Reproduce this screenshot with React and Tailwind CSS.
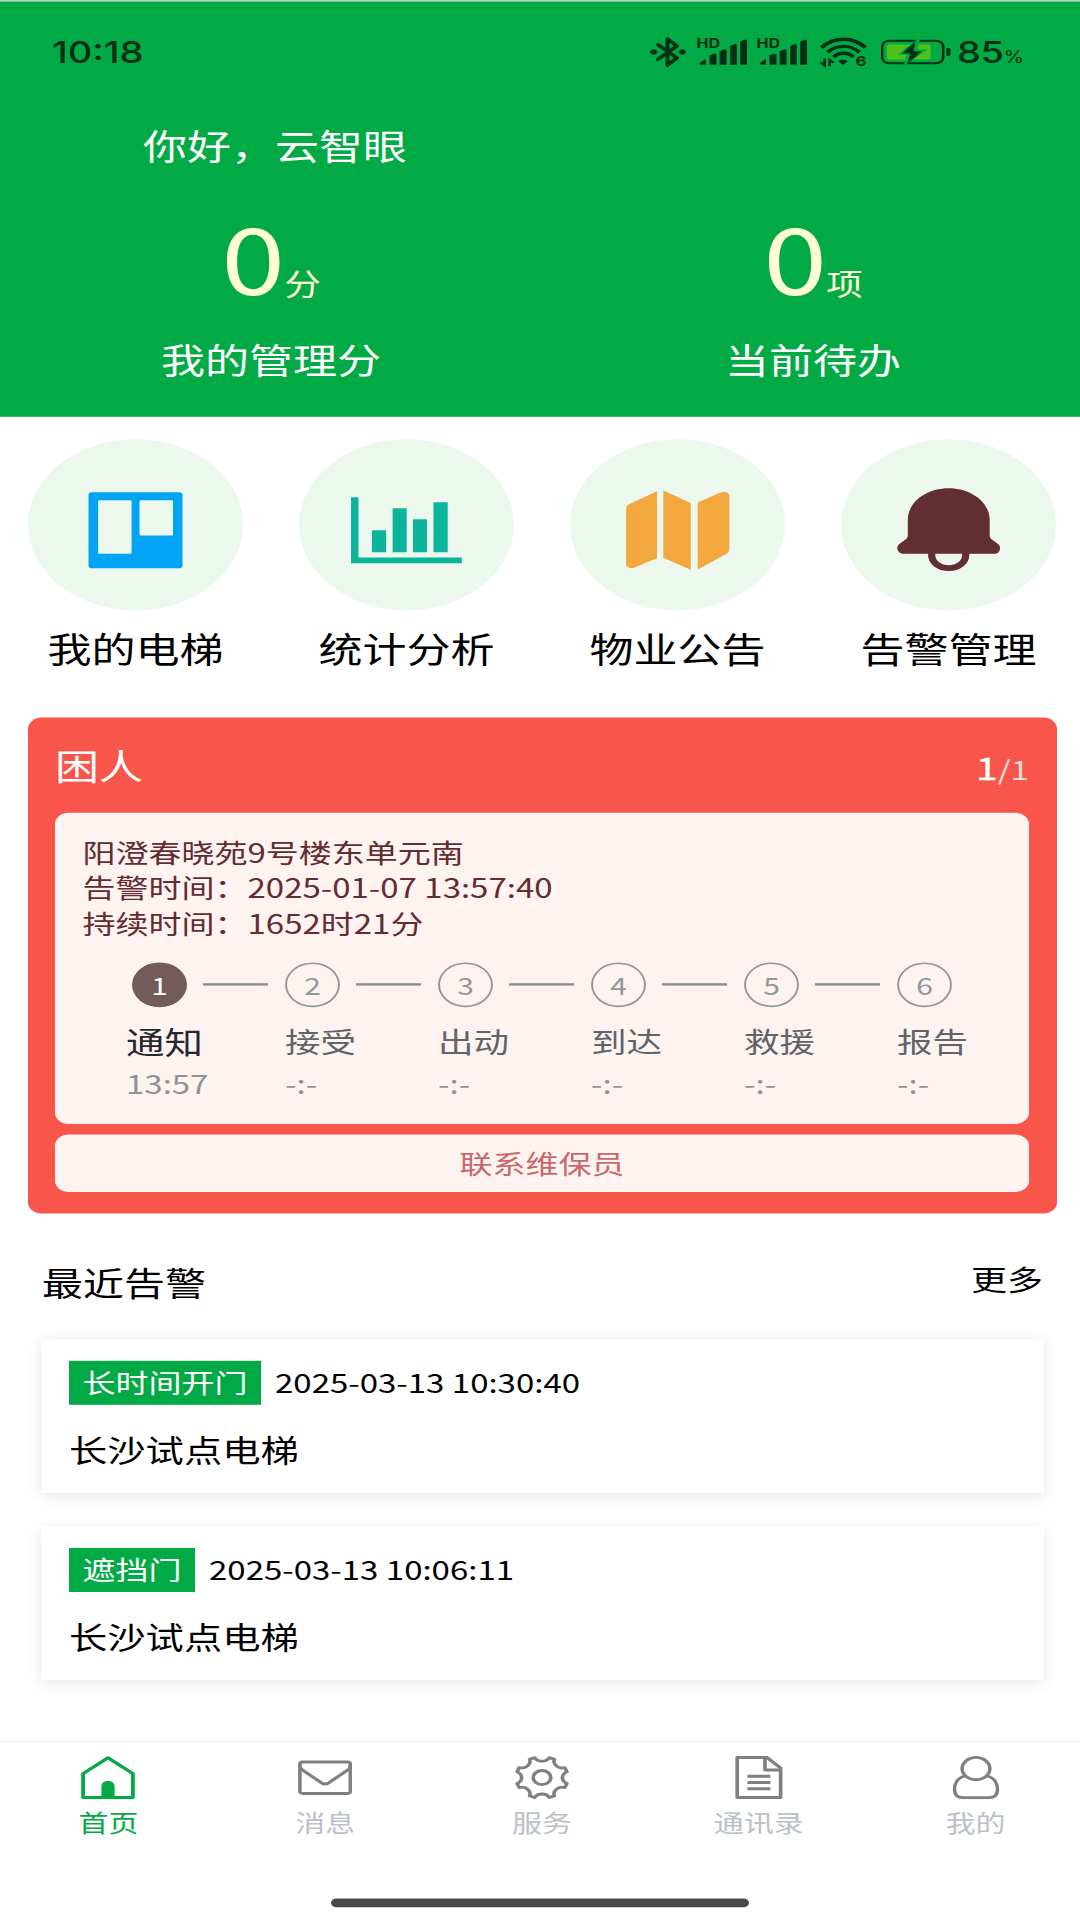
const shortcuts = [
  { label: "我的电梯", icon: <ElevatorIcon /> },
  { label: "统计分析", icon: <ChartIcon /> },
  { label: "物业公告", icon: <NoticeIcon /> },
  { label: "告警管理", icon: <BellIcon /> },
];

const steps = [
  { name: "通知", time: "13:57", done: true },
  { name: "接受", time: "-:-" },
  { name: "出动", time: "-:-" },
  { name: "到达", time: "-:-" },
  { name: "救援", time: "-:-" },
  { name: "报告", time: "-:-" },
];

const alarms = [
  { type: "长时间开门", time: "2025-03-13 10:30:40", name: "长沙试点电梯" },
  { type: "遮挡门", time: "2025-03-13 10:06:11", name: "长沙试点电梯" },
];

const tabs = [
  { label: "首页", icon: <HomeIcon />, active: true },
  { label: "消息", icon: <MailIcon /> },
  { label: "服务", icon: <GearIcon /> },
  { label: "通讯录", icon: <DocIcon /> },
  { label: "我的", icon: <UserIcon /> },
];

function ElevatorIcon() {
  return (
    <svg viewBox="0 0 215 214" className="w-full h-full">
      <rect x="60.5" y="66.3" width="94" height="95" rx="3.5" fill="#00a4f2" />
      <rect x="70.1" y="76.3" width="33.5" height="67" rx="1.5" fill="#ecf8ee" />
      <rect x="111.5" y="76.3" width="33.5" height="44" rx="1.5" fill="#ecf8ee" />
    </svg>
  );
}

function ChartIcon() {
  return (
    <svg viewBox="0 0 215 214" className="w-full h-full" fill="#0bb59b">
      <path d="M52 72.5h7.5v75.4h103.3v7.3H52z" />
      <path d="M73 113.8h14.1v27.5H73zM93.6 86.3h14.1v55H93.6zM113.9 100H128v41.3h-14.1zM134.5 78.8h14.2v62.5h-14.2z" />
    </svg>
  );
}

function NoticeIcon() {
  return (
    <svg viewBox="0 0 215 214" className="w-full h-full" fill="#f3a73f">
      <path d="M87.1 65v83.7l-22.6 11.6c-4.2 2.2-8.4.6-8.4-4.2V87c0-3 1.5-5 4-6.3z" />
      <path d="M93.3 64.2l27.5 15.4v83.7l-27.5-15z" />
      <path d="M127.7 79l21-11.3c5.5-3 10.7-2 10.7 4.3v65c0 3.5-1.3 5.6-4.2 7.2L127.7 163z" />
    </svg>
  );
}

function BellIcon() {
  return (
    <svg viewBox="0 0 215 214" className="w-full h-full">
      <path
        d="M66.8 101C66.8 79 85 61.3 107.7 61.3S148.7 79 148.7 101V120c0 3 1 4.5 2.6 5.8L157 131c4.3 4.3 1.5 12.3-4 12.3H62.5c-5.5 0-8.5-8-4.2-12.3l5.8-5.2c1.7-1.3 2.7-2.8 2.7-5.8z"
        fill="#612f31"
      />
      <path d="M90.7 142v3a17 16.2 0 0 0 34 0v-3" fill="none" stroke="#612f31" strokeWidth="7.2" />
    </svg>
  );
}

function HomeIcon() {
  return (
    <svg viewBox="0 0 54 54" className="w-[54px] h-[54px]" fill="none" stroke="#02aa45" strokeWidth="3.8" strokeLinejoin="round">
      <path d="M2.1 22L27 2.2 51.9 22v30H2.1z" />
      <path d="M20.4 52V37.5a6.6 6.6 0 0 1 13.2 0V52z" fill="#02aa45" stroke="none" />
    </svg>
  );
}

function MailIcon() {
  return (
    <svg viewBox="0 0 54 54" className="w-[54px] h-[54px]" fill="none" stroke="#808080" strokeWidth="3.6">
      <rect x="1.9" y="7.5" width="50.4" height="39.3" rx="2.5" />
      <path d="M2 12c0 3 1 4.5 3 6l18.5 15.5c2.5 2 4.7 2 7.2 0L49.2 18c2-1.5 3-3 3-6" />
    </svg>
  );
}

// eight teeth, with a concave scoop between each pair
function gearPath() {
  const point = (deg, r) => {
    const a = (deg * Math.PI) / 180;
    return `${(27 + r * Math.cos(a)).toFixed(2)} ${(27 + r * Math.sin(a)).toFixed(2)}`;
  };
  let d = `M${point(16.5, 26)}`;
  for (let i = 0; i < 8; i++) {
    const mid = 22.5 + i * 45;
    d += `L${point(mid + 6, 26)}A8.3 8.3 0 0 0 ${point(mid + 39, 26)}`;
  }
  return d + "Z";
}

function GearIcon() {
  return (
    <svg viewBox="0 0 54 54" className="w-[54px] h-[54px] overflow-visible" fill="none" stroke="#808080" strokeWidth="3.6" strokeLinejoin="round">
      <path d={gearPath()} />
      <circle cx="27" cy="27" r="8.8" />
    </svg>
  );
}

function DocIcon() {
  return (
    <svg viewBox="0 0 54 54" className="w-[54px] h-[54px]" fill="none" stroke="#808080" strokeWidth="3.7" strokeLinejoin="round">
      <path d="M5.2 2h30L48.6 15v37H5.2z" />
      <path d="M33 2v15.5h15.5M15.4 25.4h23M15.4 33.2h23M15.4 41h23" />
    </svg>
  );
}

function UserIcon() {
  return (
    <svg viewBox="0 0 54 54" className="w-[54px] h-[54px]" fill="none" stroke="#808080" strokeWidth="3.5">
      <circle cx="27" cy="15.7" r="13.9" />
      <path d="M16 25C8.5 27 5.5 34.5 5.5 42c0 6.5 3 10.2 9 10.2h25c6 0 9-3.7 9-10.2 0-7.5-3-15-10.5-17" />
    </svg>
  );
}

function BluetoothIcon() {
  return (
    <svg viewBox="0 0 36 40" className="w-9 h-10" fill="none" stroke="#022f15" strokeWidth="4" strokeLinejoin="round" strokeLinecap="round">
      <path d="M8 11l19 16.5-9.5 9V3.5l9.5 9L8 29" />
      <path d="M3.5 18.5l2 1.5-2 1.5-1.5-1.5zM32.5 18.5l1.5 1.5-1.5 1.5-2-1.5z" />
    </svg>
  );
}

function SignalIcon() {
  return (
    <svg viewBox="0 0 50 34" className="w-[50px] h-[34px] overflow-visible" fill="#022f15">
      <text x="-0.5" y="12.5" fontSize="16" fontWeight="700" fontFamily="Inter, sans-serif">HD</text>
      <path d="M2.5 31l5-4.5 1.5.5v6H3.5zM12.5 21l5.500-2 1.500 1.500V33h-7zM22.600 16l5-2.500 2 1V33h-7zM33.200 9.500l5-2.500 1.600 1V33h-6.600zM43.200 4l5-2.500L50 3v30h-6.800z" />
    </svg>
  );
}

function WifiIcon() {
  return (
    <svg viewBox="0 0 47 36" className="w-[47px] h-9 overflow-visible" fill="none" stroke="#022f15" strokeWidth="4.2">
      <path d="M1.5 12.5C14-1.5 33-1.5 45.5 12.5" />
      <path d="M7.5 18.5c9-10 23-10 32 0M13.5 24.5c5.5-6.5 14.5-6.5 20 0" />
      <path d="M18 29.5c3-2.5 7-2.5 10 0L23 34z" fill="#022f15" stroke="none" />
      <path d="M4.7 26v9l-4-4M9.7 35.5V28l4 3.5" strokeWidth="2.6" />
      <text x="35.5" y="35" fontSize="17" fontWeight="700" fill="#022f15" stroke="none" fontFamily="Inter, sans-serif">6</text>
    </svg>
  );
}

function BatteryIcon() {
  return (
    <svg viewBox="0 0 70 32" className="w-[70px] h-8">
      <rect x="1.2" y="2" width="61" height="28" rx="7" fill="none" stroke="#022f15" strokeWidth="2.5" />
      <rect x="6" y="6.5" width="43.5" height="19" rx="2" fill="#4fc31b" />
      <path d="M36 0L16 19.5h9L23 33l24-20.5H36.5L39 0z" fill="#02aa45" />
      <path d="M34.5 2.5L21 18h8.5L26 31l15-16h-8.5z" fill="#022f15" />
      <path d="M65.5 11h1.5q2.5 0 2.5 2.5v5q0 2.5-2.5 2.5h-1.5z" fill="#022f15" />
    </svg>
  );
}

function StatusBar() {
  return (
    <div className="h-[125px] pl-[52px] pr-[58px] flex items-center justify-between font-['Inter',sans-serif] font-medium text-[#022f15]">
      <span className="text-[38px] leading-none">10:18</span>
      <div className="flex items-center">
        <BluetoothIcon />
        <div className="flex gap-2.5 ml-[11px]">
          <SignalIcon />
          <SignalIcon />
        </div>
        <div className="ml-[13px] mr-[14px]">
          <WifiIcon />
        </div>
        <BatteryIcon />
        <p className="w-[65px] ml-1.5 flex items-baseline leading-none whitespace-nowrap">
          <span className="text-[38px] tracking-[-0.5px]">85</span>
          <span className="text-[21px] font-normal">%</span>
        </p>
      </div>
    </div>
  );
}

function Score({ value, unit, label }) {
  return (
    <div className="flex flex-col items-center">
      <div className="flex items-baseline text-[#fffed4]">
        <span className="text-[115px] leading-[120px]">{value}</span>
        <span className="-ml-px text-[36.5px] leading-[40px]">{unit}</span>
      </div>
      <p className="mt-10 text-[44px] leading-[60px] text-white">{label}</p>
    </div>
  );
}

function RescueStep({ step, index, last }) {
  return (
    <div className="w-[153px] shrink-0">
      <div className="flex items-center">
        <div
          className={`w-[55px] h-14 shrink-0 rounded-[50%] flex items-center justify-center text-[30px] leading-none ${step.done ? "bg-[#735b5b] text-white" : "border-2 border-[#939799] text-[#939799]"}`}
        >
          {index + 1}
        </div>
        {!last && <div className="w-[65px] h-[3px] ml-4 bg-[#8b8d8f]" />}
      </div>
      <div className={step.done ? "-ml-[6px]" : ""}>
        <p
          className={`mt-[17px] leading-[50px] ${step.done ? "text-[38.5px] text-[#26292b]" : "text-[35.5px] text-[#5f6468]"}`}
        >
          {step.name}
        </p>
        <p className="mt-[7px] text-[33px] leading-[40px] text-[#8f9395]">
          {step.time}
        </p>
      </div>
    </div>
  );
}

function TrappedCard() {
  return (
    <div className="w-[1029px] h-[620px] mt-[57px] ml-7 pl-[27px] pr-7 rounded-[14px] bg-[#f8564a]">
      <div className="h-[119px] flex items-center justify-between text-white">
        <h2 className="text-[44px]">困人</h2>
        <p className="pt-1 flex items-baseline">
          <span className="text-[39px] [-webkit-text-stroke:0.5px_white]">1</span>
          <span className="text-[33px] text-[#e3dcda]">/1</span>
        </p>
      </div>
      <div className="h-[389px] px-[27.5px] pt-[27.5px] rounded-[14px] bg-[#fff3f1]">
        <div className="text-[33px] leading-[44px] text-[#632c30]">
          <p>阳澄春晓苑9号楼东单元南</p>
          <p>告警时间：2025-01-07 13:57:40</p>
          <p>持续时间：1652时21分</p>
        </div>
        <div className="flex mt-[27.5px] pl-[49.5px]">
          {steps.map((step, i) => (
            <RescueStep
              key={step.name}
              step={step}
              index={i}
              last={i === steps.length - 1}
            />
          ))}
        </div>
      </div>
      <button className="block w-full h-[72px] mt-[13px] rounded-[14px] bg-[#fff3f1] text-[33px] leading-[70px] text-[#c9686a]">
        联系维保员
      </button>
    </div>
  );
}

function AlarmCard({ alarm }) {
  return (
    <div className="h-[192.5px] pt-[27px] px-7 bg-white shadow-[0_4px_16px_rgba(0,0,0,0.1)]">
      <div className="flex gap-3.5 text-[33px] leading-[53px]">
        <span className="h-[55px] px-[13.5px] bg-[#02aa45] text-white">
          {alarm.type}
        </span>
        <span className="text-black">{alarm.time}</span>
      </div>
      <p className="mt-[27px] text-[38.3px] leading-[55px]">{alarm.name}</p>
    </div>
  );
}

export default function App() {
  return (
    <div className="w-[1080px] h-[1920px] overflow-hidden bg-white">
      {/* laid out on the phone's 1080x2400 screen, then fitted to the frame */}
      <div className="w-[1080px] h-[2400px] origin-top-left scale-y-80 flex flex-col overflow-hidden bg-white text-black font-['Noto_Sans_CJK_SC',sans-serif]">
        <header className="h-[520.5px] bg-[#02aa45] border-t-2 border-[#b5dcc2]">
          <StatusBar />
          <h1 className="mt-[23.5px] ml-[143px] text-[44px] leading-[60px] text-white">
            你好，云智眼
          </h1>
          <div className="w-[1084px] mt-[48px] grid grid-cols-2">
            <Score value="0" unit="分" label="我的管理分" />
            <Score value="0" unit="项" label="当前待办" />
          </div>
        </header>

        <div className="w-[1084px] mt-7 grid grid-cols-4">
          {shortcuts.map((item) => (
            <div key={item.label} className="flex flex-col items-center">
              <div className="w-[215px] h-[214px] rounded-[50%] bg-[#ecf8ee]">
                {item.icon}
              </div>
              <p className="mt-[17px] text-[44px] leading-[60px]">
                {item.label}
              </p>
            </div>
          ))}
        </div>

        <TrappedCard />

        <div className="h-[157px] pt-4 pl-[42px] pr-[37px] flex items-center justify-between">
          <h2 className="text-[41px]">最近告警</h2>
          <span className="mb-2.5 text-[36px]">更多</span>
        </div>
        <div className="w-[1002.5px] ml-[41px] flex flex-col gap-[41.5px]">
          {alarms.map((alarm) => (
            <AlarmCard key={alarm.time} alarm={alarm} />
          ))}
        </div>

        <nav className="w-[1084px] mt-auto h-[224px] border-t-2 border-[#f0f0f0] flex flex-col">
          <div className="grid grid-cols-5 pt-[17px]">
            {tabs.map((tab) => (
              <div key={tab.label} className="flex flex-col items-center">
                {tab.icon}
                <span
                  className={`mt-2 text-[30px] leading-[40px] ${tab.active ? "text-[#02aa45]" : "text-[#bbc0cb]"}`}
                >
                  {tab.label}
                </span>
              </div>
            ))}
          </div>
          <div className="w-[418px] h-[11px] mt-auto mb-4 ml-[331px] rounded-full bg-[#474947]" />
        </nav>
      </div>
    </div>
  );
}
